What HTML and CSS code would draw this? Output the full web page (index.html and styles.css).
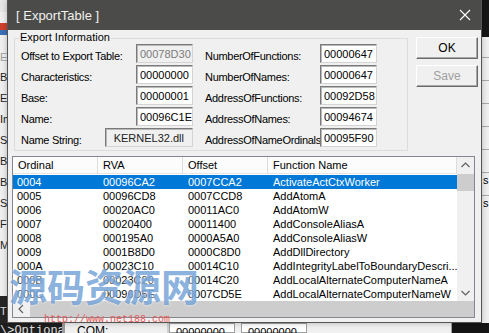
FILE: index.html
```html
<!DOCTYPE html>
<html lang="en">
<head>
    <meta charset="UTF-8">
    <title>ExportTable</title>
    <link rel="stylesheet" href="styles.css">
</head>
<body>
    <div class="desk">
        <!-- window behind the dialog -->
        <div class="app">
            <div class="app-main">
                <div class="app-left">
                    <div class="app-top"></div>
                    <div class="app-icon"></div>
                    <div class="app-labels">
                        <span class="faint">E</span>
                        <span>Ba</span><span>En</span><span>Im</span><span>Si</span>
                        <span>Ba</span><span>Ba</span><span>Se</span><span>Fil</span><span>Ma</span>
                    </div>
                    <div class="app-dark">TI</div>
                </div>
                <div class="app-center"></div>
                <div class="app-right">
                    <div class="black"></div>
                    <div class="app-rows">
                        <i></i><i></i><i></i><i></i><i></i>
                        <i><span>s</span></i><i><span>s</span></i>
                    </div>
                </div>
            </div>
            <div class="app-bottom">
                <span class="console">\&gt;Optional]</span>
                <span class="com">COM:</span>
                <span class="cell">00000000</span>
                <span class="cell">00000000</span>
                <span class="spare"></span>
                <span class="black"></span>
            </div>
        </div>

        <div class="dialog">
            <div class="titlebar">
                <span>[ ExportTable ]</span>
                <svg class="close" width="12" height="12" viewBox="0 0 12 12">
                    <path d="M1 1L11 11M11 1L1 11" stroke="#fff" stroke-width="1.1" fill="none"/>
                </svg>
            </div>
            <div class="client">
                <div class="top">
                    <div class="group">
                        <div class="legend">Export Information</div>
                        <div class="fields">
                            <div class="field"><span class="label">Offset to Export Table:</span><input class="box off" value="00078D30" readonly></div>
                            <div class="field"><span class="label">NumberOfFunctions:</span><input class="box" value="00000647" readonly></div>
                            <div class="field"><span class="label">Characteristics:</span><input class="box" value="00000000" readonly></div>
                            <div class="field"><span class="label">NumberOfNames:</span><input class="box" value="00000647" readonly></div>
                            <div class="field"><span class="label">Base:</span><input class="box" value="00000001" readonly></div>
                            <div class="field"><span class="label">AddressOfFunctions:</span><input class="box" value="00092D58" readonly></div>
                            <div class="field"><span class="label">Name:</span><input class="box" value="00096C1E" readonly></div>
                            <div class="field"><span class="label">AddressOfNames:</span><input class="box" value="00094674" readonly></div>
                            <div class="field"><span class="label">Name String:</span><input class="box wide" value="KERNEL32.dll" readonly></div>
                            <div class="field"><span class="label">AddressOfNameOrdinals:</span><input class="box" value="00095F90" readonly></div>
                        </div>
                    </div>
                    <div class="buttons">
                        <button>OK</button>
                        <button disabled>Save</button>
                    </div>
                </div>

                <div class="list">
                    <div class="list-main">
                        <div class="head">
                            <span>Ordinal</span><span>RVA</span><span>Offset</span><span>Function Name</span>
                        </div>
                        <div class="rows" id="rows"></div>
                        <div class="hscroll">
                            <svg width="16" height="16" viewBox="0 0 16 16"><path d="M9 4L5 8L9 12" stroke="#606060" stroke-width="1.2" fill="none"/></svg>
                            <div class="hthumb"></div>
                        </div>
                    </div>
                    <div class="vscroll">
                        <svg width="17" height="17" viewBox="0 0 17 17"><path d="M4.5 10L8.5 6L12.5 10" stroke="#606060" stroke-width="1.2" fill="none"/></svg>
                        <div class="vthumb"></div>
                        <div class="vtrack"></div>
                        <svg width="17" height="17" viewBox="0 0 17 17"><path d="M4.5 7L8.5 11L12.5 7" stroke="#606060" stroke-width="1.2" fill="none"/></svg>
                        <div class="corner"></div>
                    </div>
                </div>
            </div>
        </div>

        <div class="watermark">
            <span class="wm-cn">源码资源网</span>
            <span class="wm-url">http://www.net188.com</span>
        </div>
    </div>

    <script>
        // export rows, first one is selected
        const exportsList = [
            ['0004', '00096CA2', '0007CCA2', 'ActivateActCtxWorker'],
            ['0005', '00096CD8', '0007CCD8', 'AddAtomA'],
            ['0006', '00020AC0', '00011AC0', 'AddAtomW'],
            ['0007', '00020400', '00011400', 'AddConsoleAliasA'],
            ['0008', '000195A0', '0000A5A0', 'AddConsoleAliasW'],
            ['0009', '0001B8D0', '0000C8D0', 'AddDllDirectory'],
            ['000A', '00023C10', '00014C10', 'AddIntegrityLabelToBoundaryDescri...'],
            ['000B', '00023C20', '00014C20', 'AddLocalAlternateComputerNameA'],
            ['000C', '00096D5E', '0007CD5E', 'AddLocalAlternateComputerNameW']
        ];

        let html = '';
        exportsList.forEach((row, i) => {
            html += `<div class="row${i === 0 ? ' sel' : ''}">`;
            row.forEach(cell => { html += `<span>${cell}</span>`; });
            html += '</div>';
        });
        document.getElementById('rows').innerHTML = html;
    </script>
</body>
</html>
```

FILE: styles.css
```css
body {
    margin: 0;
    font-family: "Liberation Sans", Arial, sans-serif;
    font-size: 11px;
    color: #000;
    background: #000;
}
.desk {
    position: relative;
    width: 489px;
    height: 333px;
    overflow: hidden;
    background: #f0f0f0;
}

/* background window */
.app {
    display: flex;
    flex-direction: column;
    height: 100%;
}
.app-main {
    display: flex;
    height: 323px;
}
.app-left {
    width: 8px;
    display: flex;
    flex-direction: column;
    background: #f0f0f0;
    overflow: hidden;
}
.app-top {
    height: 12px;
    background: #e6e6e6;
}
.app-icon {
    height: 12px;
    margin-top: 11px;
    width: 7px;
    background: linear-gradient(#d0402c 0 55%, #3b6fb8 55%);
}
.app-labels {
    display: flex;
    flex-direction: column;
    padding-top: 12px;
    color: #222;
    flex: 1;
}
.app-labels span {
    height: 21px;
    line-height: 21px;
    white-space: nowrap;
}
.app-labels .faint {
    color: #a0a0a0;
    height: 20px;
}
.app-dark {
    height: 27px;
    background: #262626;
    color: #ddd;
    line-height: 30px;
}
.app-center {
    flex: 1;
}
.app-right {
    width: 7px;
    display: flex;
    flex-direction: column;
}
.app-right .black {
    height: 37px;
    background: #151515;
}
.app-rows {
    flex: 1;
    display: flex;
    flex-direction: column;
    padding-top: 20px;
    background: #f0f0f0;
}
.app-rows i {
    height: 22px;
    border-top: 1px solid #a8a8a8;
    font-style: normal;
}
.app-rows span {
    line-height: 14px;
    padding-left: 1px;
}
.app-bottom {
    height: 10px;
    display: flex;
    align-items: stretch;
    line-height: 17px;
    white-space: nowrap;
    overflow: hidden;
}
.console {
    width: 62px;
    background: #1e1e1e;
    color: #e0e0e0;
    font-family: "Liberation Mono", monospace;
    font-size: 12px;
    border-right: 3px solid #9a9a9a;
    overflow: hidden;
}
.com {
    width: 90px;
    padding-left: 12px;
    font-size: 12px;
    border-right: 2px solid #d0d0d0;
}
.cell {
    width: 58px;
    padding-left: 6px;
    background: #fff;
    border: 1px solid #a0a0a0;
    margin-right: 6px;
}
.spare {
    width: 138px;
    border-right: 1px solid #a0a0a0;
}
.app-bottom .black {
    flex: 1;
    background: #151515;
}

/* dialog */
.dialog {
    position: absolute;
    left: 7px;
    top: 0;
    width: 473px;
    height: 322px;
    border: 1px solid #555;
    border-top: none;
    background: #f0f0f0;
    display: flex;
    flex-direction: column;
    box-shadow: 0 0 6px rgba(0, 0, 0, 0.25);
}
.titlebar {
    height: 30px;
    background: #4b4b49;
    color: #f0f0f0;
    font-size: 13px;
    display: flex;
    align-items: center;
    justify-content: space-between;
    padding: 0 10px 0 8px;
}
.client {
    flex: 1;
    display: flex;
    flex-direction: column;
}
.top {
    display: flex;
    align-items: flex-start;
}

.group {
    margin: 8px 0 0 6px;
    width: 362px;
    padding: 0 24px 3px 6px;
    border: 1px solid #dcdcdc;
}
.legend {
    width: fit-content;
    margin: -8px 0 0 -2px;
    padding: 0 1px;
    height: 14px;
    line-height: 13px;
    background: #f0f0f0;
}
.fields {
    display: grid;
    grid-template-columns: 172px 172px;
    grid-auto-rows: 19px;
    column-gap: 12px;
    row-gap: 2px;
    margin-top: -1px;
}
.field {
    display: flex;
    align-items: center;
    justify-content: space-between;
}
.label {
    flex: 1;
    overflow: hidden;
    white-space: nowrap;
    padding-top: 4px;
    letter-spacing: -0.3px;
}
.box {
    width: 57px;
    height: 19px;
    box-sizing: border-box;
    margin: 0;
    padding: 0 0 0 3px;
    font: inherit;
    color: #000;
    background: #fff;
    border: 1px solid;
    border-color: #7a7a7a #d4d4d4 #d4d4d4 #7a7a7a;
    box-shadow: inset 1px 1px 0 #b8b8b8;
    outline: none;
}
.box.off {
    background: #f0f0f0;
    color: #7a7a7a;
}
.box.wide {
    width: 88px;
    text-align: right;
    padding-right: 8px;
    background: #f0f0f0;
    color: #222;
}

.buttons {
    display: flex;
    flex-direction: column;
    gap: 6px;
    margin: 7px 0 0 8px;
}
button {
    width: 62px;
    height: 22px;
    font: inherit;
    font-size: 12px;
    color: #000;
    background: #f0f0f0;
    border: 1px solid;
    border-color: #fff #6a6a6a #6a6a6a #fff;
    box-shadow: inset -1px -1px 0 #a8a8a8;
    padding: 0;
}
button:disabled {
    color: #a0a0a0;
}

/* list view */
.list {
    margin: 5px 0 0 4px;
    width: 461px;
    height: 160px;
    border: 1px solid #828790;
    background: #fff;
    display: flex;
}
.list-main {
    width: 444px;
    display: flex;
    flex-direction: column;
}
.head {
    display: grid;
    grid-template-columns: 85px 85px 85px 1fr;
    height: 16px;
    border-bottom: 1px solid #e5e5e5;
    background: #fcfcfc;
}
.head span {
    padding-left: 5px;
    line-height: 17px;
    border-right: 1px solid #dcdcdc;
}
.rows {
    height: 126px;
    padding-top: 1px;
    overflow: hidden;
}
.row {
    display: grid;
    grid-template-columns: 85px 85px 85px 1fr;
    height: 14px;
    line-height: 14px;
    white-space: nowrap;
}
.row span {
    padding-left: 5px;
    overflow: hidden;
}
.row span:first-child {
    padding-left: 4px;
}
.row.sel {
    background: #0078d7;
    color: #fff;
}
.hscroll {
    height: 16px;
    display: flex;
    align-items: center;
    background: #f0f0f0;
    padding-left: 1px;
}
.hthumb {
    flex: 1;
    height: 16px;
    background: #cdcdcd;
}
.vscroll {
    width: 17px;
    display: flex;
    flex-direction: column;
    background: #f0f0f0;
}
.vthumb {
    height: 17px;
    background: #cdcdcd;
}
.vtrack {
    flex: 1;
}
.corner {
    height: 16px;
    background: #cdcdcd;
}

/* watermark over the screenshot */
.watermark {
    position: absolute;
    left: 9px;
    top: 262px;
    display: flex;
    flex-direction: column;
    pointer-events: none;
}
.wm-cn {
    font-family: "Noto Sans CJK SC", sans-serif;
    font-weight: bold;
    font-size: 38px;
    line-height: 46px;
    color: rgba(80, 138, 205, 0.68);
    text-shadow: 0 0 3px rgba(255, 255, 255, 0.8);
}
.wm-url {
    margin: 6px 0 0 35px;
    font-family: "Liberation Mono", monospace;
    font-size: 10px;
    line-height: 12px;
    color: #e85a5a;
}
```
